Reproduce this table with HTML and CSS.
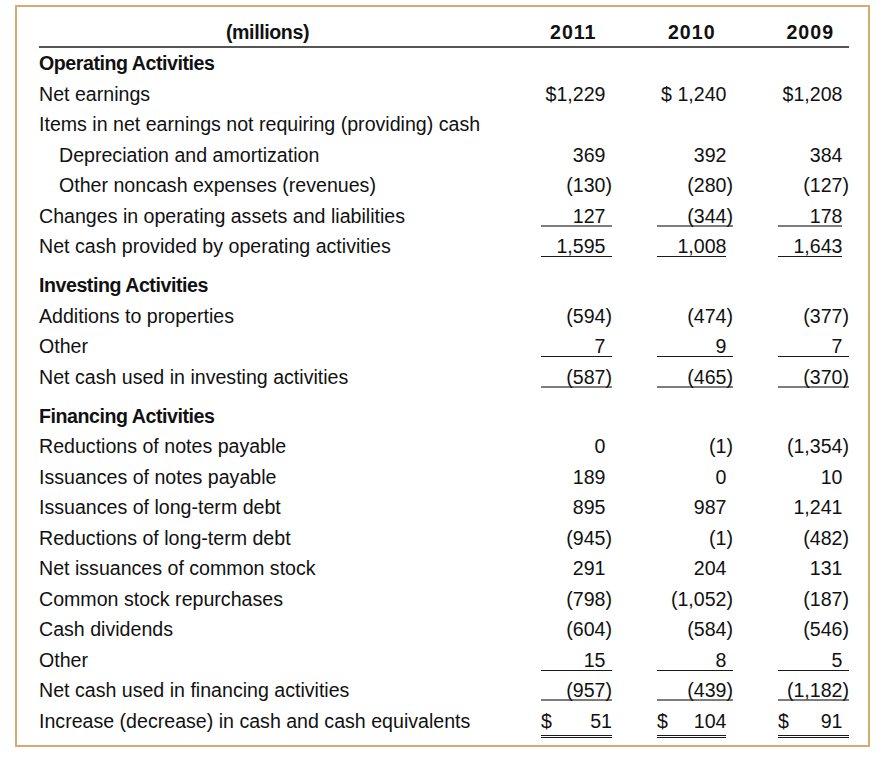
FILE: index.html
```html
<!DOCTYPE html>
<html lang="en">
<head>
<meta charset="utf-8">
<title>Statement of Cash Flows</title>
<link rel="stylesheet" href="styles.css">
</head>
<body>
<div class="statement">
  <div class="row head">
    <div class="label center">(millions)</div>
    <div class="yr">2011</div>
    <div class="yr">2010</div>
    <div class="yr">2009</div>
  </div>

  <div class="row section"><div class="label">Operating Activities</div></div>
  <div class="row"><div class="label">Net earnings</div><div class="num">$1,229</div><div class="num">$ 1,240</div><div class="num">$1,208</div></div>
  <div class="row"><div class="label">Items in net earnings not requiring (providing) cash</div></div>
  <div class="row"><div class="label indent">Depreciation and amortization</div><div class="num">369</div><div class="num">392</div><div class="num">384</div></div>
  <div class="row"><div class="label indent">Other noncash expenses (revenues)</div><div class="num neg">(130)</div><div class="num neg">(280)</div><div class="num neg">(127)</div></div>
  <div class="row"><div class="label">Changes in operating assets and liabilities</div><div class="num ul2">127</div><div class="num neg ul2">(344)</div><div class="num ul2 short">178</div></div>
  <div class="row"><div class="label">Net cash provided by operating activities</div><div class="num ul1">1,595</div><div class="num ul1 short">1,008</div><div class="num ul1 short">1,643</div></div>

  <div class="row section gap"><div class="label">Investing Activities</div></div>
  <div class="row"><div class="label">Additions to properties</div><div class="num neg">(594)</div><div class="num neg">(474)</div><div class="num neg">(377)</div></div>
  <div class="row"><div class="label">Other</div><div class="num ul1">7</div><div class="num ul1">9</div><div class="num ul1">7</div></div>
  <div class="row"><div class="label">Net cash used in investing activities</div><div class="num neg ul2">(587)</div><div class="num neg ul2">(465)</div><div class="num neg ul2">(370)</div></div>

  <div class="row section gap"><div class="label">Financing Activities</div></div>
  <div class="row"><div class="label">Reductions of notes payable</div><div class="num">0</div><div class="num neg">(1)</div><div class="num neg">(1,354)</div></div>
  <div class="row"><div class="label">Issuances of notes payable</div><div class="num">189</div><div class="num">0</div><div class="num">10</div></div>
  <div class="row"><div class="label">Issuances of long-term debt</div><div class="num">895</div><div class="num">987</div><div class="num">1,241</div></div>
  <div class="row"><div class="label">Reductions of long-term debt</div><div class="num neg">(945)</div><div class="num neg">(1)</div><div class="num neg">(482)</div></div>
  <div class="row"><div class="label">Net issuances of common stock</div><div class="num">291</div><div class="num">204</div><div class="num">131</div></div>
  <div class="row"><div class="label">Common stock repurchases</div><div class="num neg">(798)</div><div class="num neg">(1,052)</div><div class="num neg">(187)</div></div>
  <div class="row"><div class="label">Cash dividends</div><div class="num neg">(604)</div><div class="num neg">(584)</div><div class="num neg">(546)</div></div>
  <div class="row"><div class="label">Other</div><div class="num ul1">15</div><div class="num ul1">8</div><div class="num ul1">5</div></div>
  <div class="row"><div class="label">Net cash used in financing activities</div><div class="num neg ul2">(957)</div><div class="num neg ul2">(439)</div><div class="num neg ul2">(1,182)</div></div>
  <div class="row total"><div class="label">Increase (decrease) in cash and cash equivalents</div><div class="num neg dbl"><span>$</span><span>51</span></div><div class="num short dbl"><span>$</span><span>104</span></div><div class="num dbl"><span>$</span><span>91</span></div></div>
</div>
</body>
</html>
```

FILE: styles.css
```css
html, body {
  margin: 0;
  padding: 0;
  background: #ffffff;
}

body {
  font-family: "Liberation Sans", Arial, sans-serif;
  font-size: 19.6px;
  color: #111111;
}

.statement {
  box-sizing: border-box;
  width: 855px;
  height: 742px;
  margin: 5px 0 0 15px;
  padding: 0 19px 0 22px;
  border: 2px solid #d4aa6e;
}

.row {
  display: grid;
  grid-template-columns: 1fr 71px 76px 71px;
  column-gap: 45px;
  height: 30.5px;
  align-items: center;
}

.label,
.num,
.yr {
  line-height: 20px;
  white-space: nowrap;
}

.head {
  box-sizing: border-box;
  height: 41px;
  padding-top: 15px;
  align-items: start;
  border-bottom: 2px solid #555555;
  font-weight: bold;
}

.head .label {
  letter-spacing: -0.4px;
}

.center {
  text-align: center;
}

.yr {
  text-align: center;
  padding-right: 0.333em;
  letter-spacing: 1px;
}

.section .label {
  font-weight: bold;
  letter-spacing: -0.45px;
}

.gap {
  margin-top: 8.5px;
}

.indent {
  padding-left: 20px;
}

.num {
  text-align: right;
  padding-right: 0.333em;
}

.num.neg {
  padding-right: 0;
}

.num.short {
  margin-right: 0.333em;
  padding-right: 0;
}

.ul1 {
  box-shadow: 0 1px 0 #1a1a1a;
}

.ul2 {
  box-shadow: inset 0 -1px 0 #7d7d7d, 0 1px 0 #7d7d7d;
}

.total {
  align-items: start;
}

.total > * {
  margin-top: 5px;
}

.dbl {
  display: flex;
  justify-content: space-between;
  padding-bottom: 4px;
  border-bottom: 3px double #1a1a1a;
}
```
